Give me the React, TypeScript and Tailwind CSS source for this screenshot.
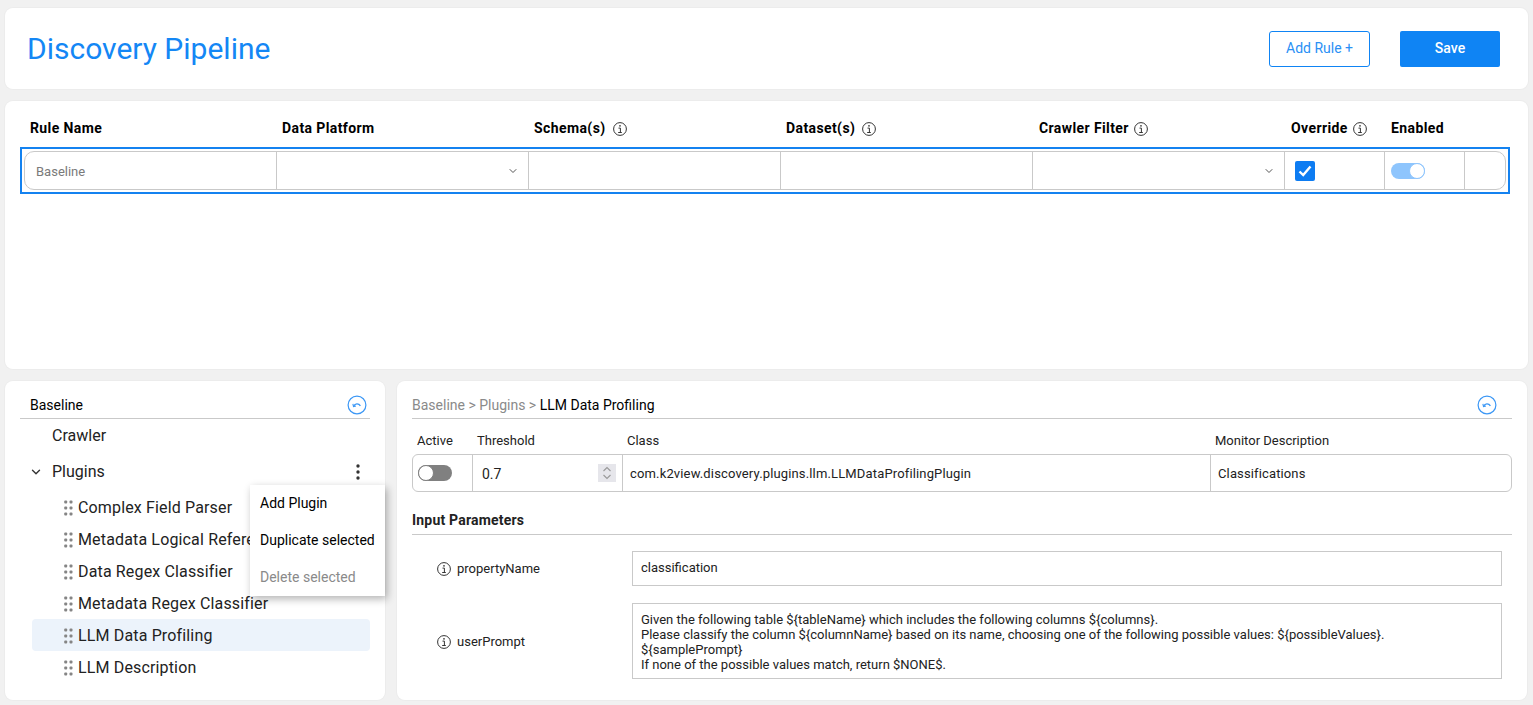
import React from "react";
import { ChevronDown } from "lucide-react";

const font = { fontFamily: "Roboto, 'Liberation Sans', sans-serif" };

function Info() {
  return (
    <svg width="14" height="14" viewBox="0 0 14 14" fill="none" className="shrink-0">
      <circle cx="7" cy="7" r="6.4" stroke="#333" strokeWidth="1" />
      <circle cx="7" cy="3.8" r="0.85" fill="#333" />
      <path d="M5.5 6.1h1.9v4.1M5.2 10.5h3.6" stroke="#333" strokeWidth="1" />
    </svg>
  );
}

function Back() {
  return (
    <svg width="20" height="20" viewBox="0 0 20 20" fill="none">
      <circle cx="10" cy="10" r="8.9" stroke="#3b97f5" strokeWidth="1.2" />
      <path d="M6.8 11c1.2-2.6 4.8-2.9 6.6-.1" stroke="#3b97f5" strokeWidth="1.3" />
      <path d="M5.9 8.9 6.5 11.6 9 11" stroke="#3b97f5" strokeWidth="1.1" />
    </svg>
  );
}

function Grip() {
  return (
    <svg width="9" height="16" viewBox="0 0 9 16" className="shrink-0" fill="#858585">
      {[2, 8, 14].map((y) => (
        <React.Fragment key={y}>
          <rect x="0.2" y={y - 1.5} width="3" height="3" rx="1" />
          <rect x="5.5" y={y - 1.5} width="3" height="3" rx="1" />
        </React.Fragment>
      ))}
    </svg>
  );
}

function Toggle({ on }: { on: boolean }) {
  return on ? (
    <div className="w-[34px] h-[16px] rounded-full bg-[#8ec5fd] relative">
      <div className="absolute right-0 top-0 w-[16px] h-[16px] rounded-full bg-white border border-[#8ec5fd]" />
    </div>
  ) : (
    <div className="w-[34px] h-[16px] rounded-full bg-[#808080] relative">
      <div className="absolute left-0 top-0 w-[16px] h-[16px] rounded-full bg-white border border-[#808080]" />
    </div>
  );
}

function Head({ w, label, info, extra = "pl-[6px] gap-[7px]" }: { w: string; label: string; info?: boolean; extra?: string }) {
  return (
    <div className={`${w} ${extra} flex items-center text-[14px] font-bold tracking-[0.4px] text-black`}>
      <span>{label}</span>
      {info && <Info />}
    </div>
  );
}

const items = [
  "Complex Field Parser",
  "Metadata Logical Reference",
  "Data Regex Classifier",
  "Metadata Regex Classifier",
  "LLM Data Profiling",
  "LLM Description",
];

export default function App() {
  return (
    <div style={font} className="h-[705px] w-[1533px] overflow-hidden bg-[#f1f1f1] pt-[8px] px-[5px] flex flex-col gap-[12px]">
      <div className="h-[81px] shrink-0 bg-white rounded-[8px] shadow-[0_0_0_1px_#ececec] flex items-center justify-between pl-[22px] pr-[28px]">
        <h1 className="text-[30px] text-[#1487f5] font-normal leading-none">Discovery Pipeline</h1>
        <div className="flex items-center gap-[30px]">
          <button className="w-[101px] h-[36px] border border-[#0f84f4] rounded-[3px] text-[14px] text-[#2a90f5] bg-white">Add Rule +</button>
          <button className="w-[100px] h-[36px] rounded-[2px] bg-[#0f84f4] text-white text-[14px] font-medium">Save</button>
        </div>
      </div>

      <div className="h-[268px] shrink-0 bg-white rounded-[8px] shadow-[0_0_0_1px_#ececec] pl-[15px] pt-[18px]">
        <div className="flex h-[19px] pl-[4px] items-center">
          <Head w="w-[252px]" label="Rule Name" />
          <Head w="w-[252px]" label="Data Platform" />
          <Head w="w-[252px]" label="Schema(s)" info />
          <Head w="w-[252px]" label="Dataset(s)" info />
          <Head w="w-[252px]" label="Crawler Filter" info extra="pl-[7px] gap-[5px]" />
          <Head w="w-[100px]" label="Override" info extra="pl-[7px] gap-[5px]" />
          <Head w="w-[80px]" label="Enabled" extra="pl-[7px]" />
        </div>
        <div className="mt-[9px] w-[1490px] h-[47px] border-2 border-[#1482f0] p-[2px]">
          <div className="h-full flex rounded-[10px] border border-[#c9c9c9] text-[13px]">
            <div className="w-[252px] border-r border-[#c9c9c9] flex items-center pl-[11px] pt-[2px] text-[#7a7a7a]">Baseline</div>
            <div className="w-[252px] border-r border-[#c9c9c9] flex items-center justify-end pr-[9px]"><ChevronDown size={12} color="#555" /></div>
            <div className="w-[252px] border-r border-[#c9c9c9]" />
            <div className="w-[252px] border-r border-[#c9c9c9]" />
            <div className="w-[252px] border-r border-[#c9c9c9] flex items-center justify-end pr-[9px]"><ChevronDown size={12} color="#555" /></div>
            <div className="w-[100px] border-r border-[#c9c9c9] flex items-center pl-[10px]">
              <div className="w-[20px] h-[20px] rounded-[2px] bg-[#0d7cf2] flex items-center justify-center">
                <svg width="14" height="12" viewBox="0 0 14 12" fill="none"><path d="M1.5 6.5 5.2 10 12.5 1.5" stroke="#fff" strokeWidth="2.4" /></svg>
              </div>
            </div>
            <div className="w-[80px] border-r border-[#c9c9c9] flex items-center pl-[6px]"><Toggle on /></div>
            <div className="flex-1" />
          </div>
        </div>
      </div>

      <div className="flex gap-[12px] h-[319px] shrink-0">
        <div className="relative w-[380px] bg-white rounded-[8px] shadow-[0_0_0_1px_#ececec] px-[15px]">
          <div className="h-[38px] flex items-center justify-between border-b border-[#c9c9c9] pl-[10px] pr-[3px] pt-[11px] text-[14px] text-black">
            <span>Baseline</span>
            <Back />
          </div>
          <div className="h-[34px] flex items-center pl-[32px] text-[16px] text-[#222]">Crawler</div>
          <div className="h-[38px] flex items-center text-[16px] text-[#222] pl-[9px] pr-[10px]">
            <ChevronDown size={14} color="#333" strokeWidth={2.4} className="mr-[9px]" />
            <span className="flex-1">Plugins</span>
            <svg width="4" height="16" viewBox="0 0 4 16" fill="#333"><circle cx="2" cy="2" r="1.7" /><circle cx="2" cy="8" r="1.7" /><circle cx="2" cy="14" r="1.7" /></svg>
          </div>
          <div className="ml-[12px]">
            {items.map((t) => (
              <div key={t} className={`h-[32px] flex items-center gap-[5px] pl-[32px] pt-[2px] text-[16px] tracking-[0.15px] text-[#222] rounded-[4px] ${t === "LLM Data Profiling" ? "bg-[#ecf3fb]" : ""}`}>
                <Grip />
                <span className="whitespace-nowrap">{t}</span>
              </div>
            ))}
          </div>
          <div className="absolute left-[245px] top-[104px] w-[135px] h-[111px] bg-white shadow-[2px_3px_8px_rgba(0,0,0,0.3)] text-[14px] pl-[10px] flex flex-col justify-around">
            <div className="text-black">Add Plugin</div>
            <div className="text-black whitespace-nowrap">Duplicate selected</div>
            <div className="text-[#8a8a8a]">Delete selected</div>
          </div>
        </div>

        <div className="w-[1130px] bg-white rounded-[8px] shadow-[0_0_0_1px_#ececec] px-[15px]">
          <div className="h-[38px] flex items-center justify-between border-b border-[#c9c9c9] pr-[15px] pt-[11px] text-[14px]">
            <span><span className="text-[#8a8a8a]">Baseline &gt; Plugins &gt; </span><span className="text-black">LLM Data Profiling</span></span>
            <Back />
          </div>
          <div className="flex h-[35px] pt-[9px] items-center text-[13px] text-[#222]">
            <div className="w-[65px] pl-[5px]">Active</div>
            <div className="w-[150px]">Threshold</div>
            <div className="w-[588px]">Class</div>
            <div>Monitor Description</div>
          </div>
          <div className="h-[38px] flex border border-[#c9c9c9] rounded-[6px] text-[13px] text-[#222]">
            <div className="w-[60px] border-r border-[#c9c9c9] flex items-center pl-[5px]"><Toggle on={false} /></div>
            <div className="w-[150px] border-r border-[#c9c9c9] flex items-center justify-between pl-[9px] pr-[6px] text-[14px]">
              <span className="pt-[2px]">0.7</span>
              <div className="w-[18px] h-[18px] bg-[#e6e6eb] flex items-center justify-center">
                <svg width="10" height="14" viewBox="0 0 10 14" fill="none" stroke="#999" strokeWidth="1.1"><path d="M1.5 5 5 1.5 8.5 5M1.5 9 5 12.5 8.5 9" /></svg>
              </div>
            </div>
            <div className="w-[588px] border-r border-[#c9c9c9] flex items-center pl-[7px] pt-[2px] tracking-[0.15px]">com.k2view.discovery.plugins.llm.LLMDataProfilingPlugin</div>
            <div className="flex-1 flex items-center pl-[7px] pt-[2px] tracking-[0.13px]">Classifications</div>
          </div>
          <div className="mt-[18px] h-[25px] border-b border-[#c9c9c9] text-[14px] font-bold tracking-[0.2px] text-[#222]">Input Parameters</div>
          <div className="mt-[16px] flex items-center h-[35px]">
            <div className="w-[220px] pl-[25px] flex items-center gap-[6px] text-[13px] text-[#222]"><Info /><span>propertyName</span></div>
            <div className="w-[870px] h-[35px] border border-[#c9c9c9] flex items-center pl-[8px] text-[13px] text-[#222] pb-[2px]">classification</div>
          </div>
          <div className="mt-[17px] flex items-center h-[76px]">
            <div className="w-[220px] pl-[25px] pt-[2px] flex items-center gap-[6px] text-[13px] text-[#222]"><Info /><span>userPrompt</span></div>
            <div className="w-[870px] h-[76px] border border-[#c9c9c9] px-[8px] pt-[8px] text-[13px] leading-[15px] text-[#222] whitespace-pre">
              {"Given the following table ${tableName} which includes the following columns ${columns}.\nPlease classify the column ${columnName} based on its name, choosing one of the following possible values: ${possibleValues}.\n${samplePrompt}\nIf none of the possible values match, return $NONE$."}
            </div>
          </div>
        </div>
      </div>
    </div>
  );
}
